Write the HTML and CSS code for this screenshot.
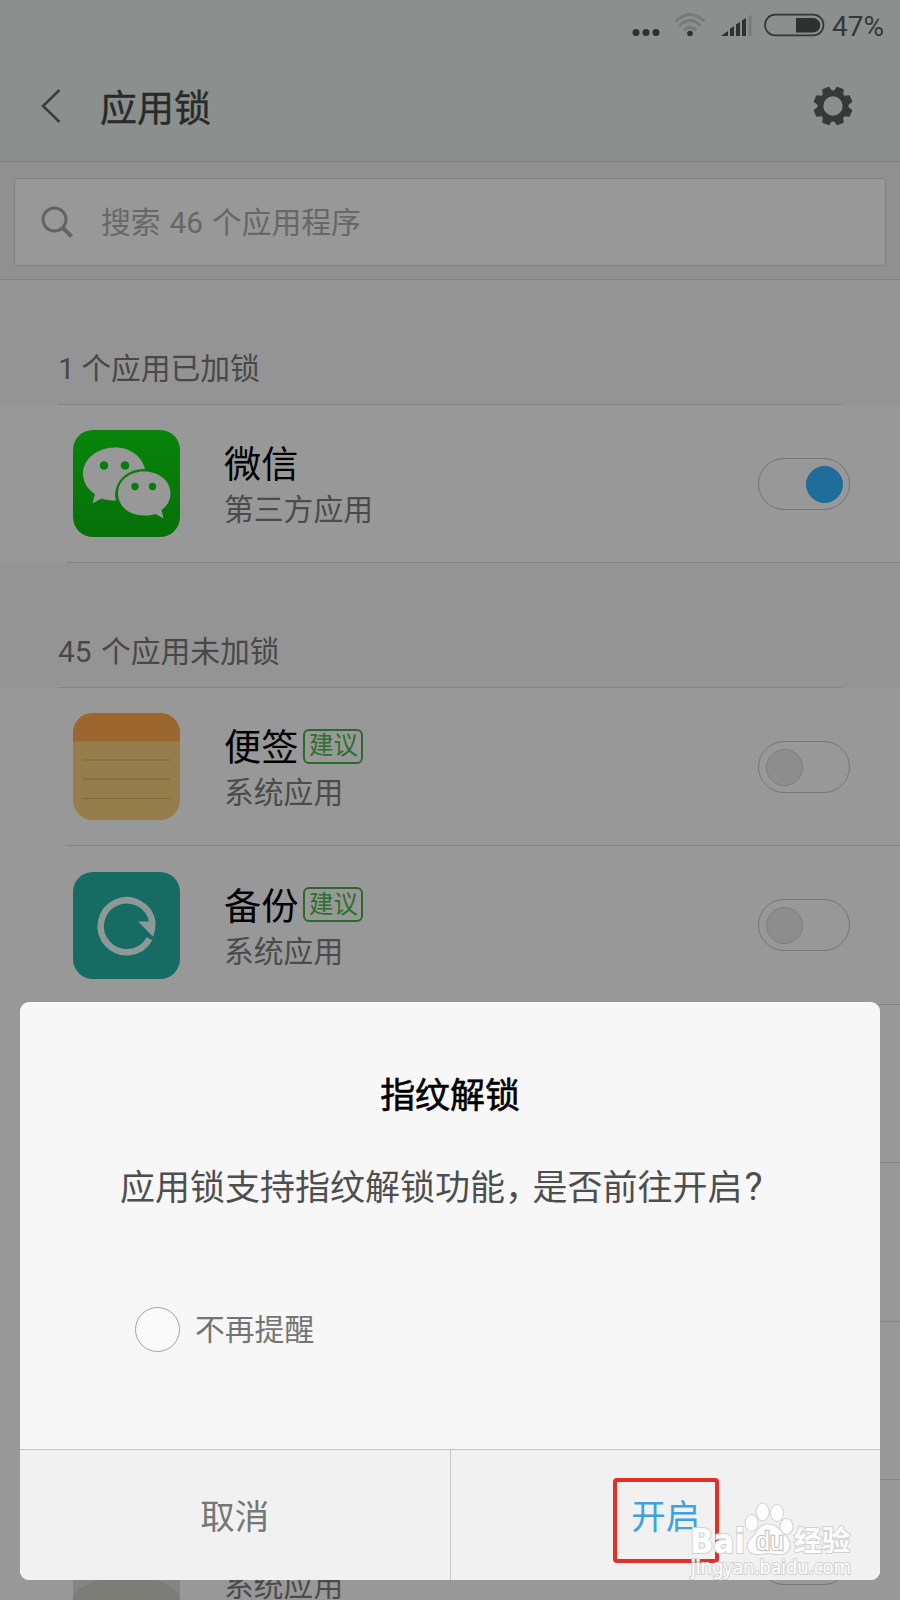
FILE: index.html
```html
<!DOCTYPE html>
<html lang="zh-CN">
<head>
<meta charset="utf-8">
<title>应用锁</title>
<link rel="stylesheet" href="styles.css">
</head>
<body>
<div class="screen">
  <header class="top">
    <div class="status">
      <svg class="status-icons" width="200" height="40" viewBox="0 0 200 40">
        <g fill="#2f3030"><circle cx="11" cy="22.500" r="3.500"/><circle cx="21" cy="22.500" r="3.500"/><circle cx="31" cy="22.500" r="3.500"/><circle cx="65" cy="23.500" r="2.800"/></g>
        <g fill="none" stroke="#777a79" stroke-width="2.800"><path d="M50.500 11.500Q65-2.500 79.500 11.500"/><path d="M54.500 15.700Q65 5.500 75.500 15.700"/><path d="M59 20.500Q65 14 71 20.500"/></g>
        <path fill="#2f3030" d="M96 26l7-5v5zM105 26v-7.300l4-2.500V26zM111 26V14.500l4-2.500v14zM117 26V10.500L121 8v18z"/>
        <path fill="#777a79" d="M123.500 26V6.500l3-1.500v21z"/>
        <rect x="140" y="4.700" width="58.500" height="20.600" rx="10.300" fill="none" stroke="#353636" stroke-width="1.700"/>
        <path fill="#2f3030" d="M171 8h17a7.300 7.300 0 0 1 0 14.600h-17z"/>
      </svg>
      <span class="percent">47%</span>
    </div>
    <div class="titlebar">
      <svg class="back" width="22" height="36" viewBox="0 0 22 36"><path d="M19.500 2L3 18l16.500 16" fill="none" stroke="#3b3d3c" stroke-width="2.500"/></svg>
      <h1 class="title">应用锁</h1>
      <svg class="gear" width="40" height="40" viewBox="-20 -20 40 40">
        <g fill="#373838">
          <path fill-rule="evenodd" d="M-15.500 0a15.500 15.500 0 1 0 31 0a15.500 15.500 0 1 0-31 0zM-9.700 0a9.700 9.700 0 1 1 19.400 0a9.700 9.700 0 1 1-19.400 0z"/>
          <g id="teeth"><path id="tooth" d="M-5.500-12l1.500-6.500q.2-1 1.200-1h5.600q1 0 1.200 1L5.500-12z" transform="rotate(22.500)"/><use href="#tooth" transform="rotate(45)"/><use href="#tooth" transform="rotate(90)"/><use href="#tooth" transform="rotate(135)"/></g>
          <use href="#teeth" transform="rotate(180)"/>
        </g>
      </svg>
    </div>
  </header>

  <div class="search-area">
    <div class="search">
      <svg width="34" height="34" viewBox="0 0 34 34"><g fill="none" stroke="#636363" stroke-width="3"><circle cx="14.500" cy="14.500" r="11.500"/><path d="M22.500 22.500l9 9" stroke-width="4"/></g></svg>
      <span class="placeholder">搜索 46 个应用程序</span>
    </div>
  </div>

  <h2 class="section">1 个应用已加锁</h2>
  <div class="row">
    <svg class="icon" viewBox="0 0 107 107">
      <defs><linearGradient id="wx" x2="0" y2="1"><stop stop-color="#07850b"/><stop offset="1" stop-color="#077009"/></linearGradient></defs>
      <rect width="107" height="107" rx="20" fill="url(#wx)"/>
      <path fill="#989898" d="M72 39C69 26 57 17.500 42 17.500C24 17.500 10 29 10 44c0 8 4.500 15.500 12 20l-2.500 9.500 9-5c4.500 1.400 8.500 2 14.500 2c-4-16 9-32 29-31.500z"/>
      <path fill="#989898" d="M71 41.500c15 0 26.500 9.500 26.500 22 0 7-3.500 12.500-9 16.500l2 8.500-8-4.500c-3.500 1-7 1.500-11.500 1.500-15 0-26-9.500-26-22s11-22 26-22z"/>
      <g fill="#077c0a"><circle cx="31" cy="35.500" r="4.300"/><circle cx="52" cy="35.500" r="4.300"/><circle cx="62" cy="56.500" r="3.700"/><circle cx="79.500" cy="56.500" r="3.700"/></g>
    </svg>
    <div class="info"><div class="name">微信</div><div class="kind">第三方应用</div></div>
    <div class="toggle on"><i></i></div>
  </div>

  <h2 class="section unlocked">45 个应用未加锁</h2>
  <div class="row">
    <svg class="icon" viewBox="0 0 107 107">
      <defs><clipPath id="tile"><rect width="107" height="107" rx="20"/></clipPath></defs>
      <g clip-path="url(#tile)"><rect width="107" height="107" fill="#957d4c"/><rect width="107" height="28.500" fill="#9c672f"/></g>
      <path d="M9 47h88M9 66h88M9 85.500h88" stroke="#80683c"/>
    </svg>
    <div class="info"><div class="name">便签<span class="badge">建议</span></div><div class="kind">系统应用</div></div>
    <div class="toggle"><i></i></div>
  </div>
  <div class="row">
    <svg class="icon" viewBox="0 0 107 107">
      <rect width="107" height="107" rx="20" fill="#166c63"/>
      <path d="M76.500 66.800A26 26 0 1 1 79.500 51" fill="none" stroke="#8b9a98" stroke-width="6.500"/>
      <path d="M65 49.500h17.300q.8 7-2.300 15.200z" fill="#8b9a98"/>
    </svg>
    <div class="info"><div class="name">备份<span class="badge">建议</span></div><div class="kind">系统应用</div></div>
    <div class="toggle"><i></i></div>
  </div>
  <div class="row"></div>
  <div class="row"></div>
  <div class="row"></div>
  <div class="row">
    <svg class="icon" viewBox="0 0 107 107">
      <rect width="107" height="107" rx="6" fill="#858585"/><ellipse cx="53.500" cy="104" rx="60" ry="34" fill="#7d7d77"/>
    </svg>
    <div class="info"><div class="name"></div><div class="kind">系统应用</div></div>
    <div class="toggle"><i></i></div>
  </div>

  <div class="dialog">
    <div class="dialog-body">
      <h3 class="dialog-title">指纹解锁</h3>
      <p class="message">应用锁支持指纹解锁功能<span class="comma">，</span>是否前往开启<span class="question">?</span></p>
      <label class="remind"><i class="radio"></i><span>不再提醒</span></label>
    </div>
    <div class="actions">
      <div class="action"><span class="cancel">取消</span></div>
      <div class="action primary"><span class="mark">开启</span></div>
    </div>
  </div>

  <div class="watermark">
    <svg width="180" height="90" viewBox="0 0 180 90">
      <g class="wm">
        <text x="10" y="53" class="wm-brand" textLength="55" lengthAdjust="spacingAndGlyphs">Bai</text>
        <ellipse cx="71.500" cy="23" rx="6" ry="8"/><ellipse cx="82.500" cy="12" rx="6" ry="8.500"/><ellipse cx="97" cy="13" rx="6" ry="8"/><ellipse cx="106.500" cy="26.500" rx="6" ry="7.500"/>
        <path d="M88 24.500c-9 0-11 8-15.500 13-8 7-5 16.500 5 16.500 5 0 7-1 10.500-1s8 1 13 1c8 0 11.500-9.500 5.500-16.500-6-6-9.500-13-18.500-13z"/>
        <text x="76" y="50" class="wm-du">du</text>
        <text x="114" y="51" class="wm-cn">经验</text>
        <text x="11" y="74" class="wm-url" textLength="160" lengthAdjust="spacingAndGlyphs">jingyan.baidu.com</text>
      </g>
    </svg>
  </div>
</div>
</body>
</html>
```
FILE: styles.css
```css
* { box-sizing: border-box; }
body { margin: 0; background: #989898; font-family: Roboto, "Noto Sans CJK SC", sans-serif; }
h1, h2, h3, p { margin: 0; font-weight: 400; }
svg { display: block; flex: none; }
.screen { position: relative; width: 900px; height: 1600px; overflow: hidden; background: #989898; }

.top { height: 162px; background: #8b8f8e; border-bottom: 1px solid #7f8181; }
.status { display: flex; justify-content: flex-end; height: 52px; padding: 10px 14px 0 0; }
.status-icons { margin-right: 7px; }
.percent { width: 54px; padding-top: 1px; font-size: 28px; line-height: 32px; color: #363737; white-space: nowrap; }
.titlebar { display: flex; align-items: center; height: 108px; padding: 0 47px 0 40px; }
.title { flex: 1; margin-left: 38px; padding-top: 8px; font-size: 37px; line-height: 54px; color: #292a2a; -webkit-text-stroke: .4px #292a2a; }

.search-area { height: 118px; padding: 16px 14px 14px; background: #909090; border-bottom: 1px solid #828282; }
.search { display: flex; align-items: center; gap: 27px; height: 88px; padding-left: 25px; background: #989898; border: 1px solid #828282; border-radius: 3px; font-size: 29.8px; color: #676767; }
.placeholder { padding-bottom: 4px; word-spacing: 1.5px; }

.section { height: 124.500px; padding: 67px 0 0 58px; background: linear-gradient(#858585, #858585) 58px 100% / 784px 1px no-repeat #949494; font-size: 29.8px; line-height: 44px; color: #484848; word-spacing: -1px; }
.unlocked { word-spacing: 2px; }
.row { display: flex; align-items: center; height: 158.500px; padding: 0 50px 0 73px; background: linear-gradient(#858585, #858585) 66px 100% / 834px 1px no-repeat #989898; }
.icon { width: 107px; height: 107px; }
.info { flex: 1; margin-left: 44px; padding-top: 5px; }
.name { display: flex; align-items: center; height: 48px; font-size: 37.200px; line-height: 48px; color: #000; }
.kind { height: 42px; font-size: 29.800px; line-height: 42px; color: #4b4b4b; }
.badge { display: flex; align-items: center; justify-content: center; width: 60px; height: 35px; margin: -4px 0 0 5px; border: 2px solid #2a6a28; border-radius: 6px; font-size: 24.500px; line-height: 30px; color: #2c702b; }
.toggle { width: 92px; height: 52px; padding: 7px; border: 1px solid #767676; border-radius: 26px; }
.toggle i { display: block; width: 37px; height: 37px; border: 1px solid #7e7e7e; border-radius: 50%; background: #8d8d8d; }
.toggle.on i { margin-left: 40px; border-color: #1e6d9b; background: #1e6d9b; }

.dialog { position: absolute; left: 20px; top: 1002px; width: 860px; height: 578px; display: flex; flex-direction: column; border-radius: 9px; background: #f7f7f7; overflow: hidden; }
.dialog-body { flex: 1; padding: 69px 100px 0; }
.dialog-title { font-size: 34.900px; line-height: 52px; color: #000; text-align: center; -webkit-text-stroke: .6px #000; }
.message { margin-top: 40px; font-size: 35px; line-height: 52px; color: #4e4e4e; white-space: nowrap; }
.comma { letter-spacing: -7.500px; }
.question { margin-left: 2px; font-size: 38px; line-height: 1; }
.remind { display: flex; align-items: center; gap: 15px; height: 46px; margin: 91px 0 0 15px; font-size: 29.800px; color: #747474; }
.remind span { padding-bottom: 4px; }
.radio { width: 45px; height: 45px; border: 1.500px solid #a3a3a3; border-radius: 50%; background: #fafafa; }
.actions { display: flex; height: 131px; border-top: 1px solid #c2c2c2; background: #f1f1f1; }
.action { display: flex; flex: 1; align-items: center; justify-content: center; font-size: 34.500px; line-height: 50px; color: #767676; }
.action + .action { border-left: 1px solid #c9c9c9; }
.cancel { padding-top: 4px; }
.action.primary { color: #3ea2df; }
.mark { display: flex; align-items: center; justify-content: center; width: 106px; height: 85px; margin: 10px 0 0 1px; padding-bottom: 7px; border: 4px solid #e13126; border-radius: 4px; }

.watermark { position: absolute; left: 680px; top: 1500px; }
.wm { fill: #fdfdfd; stroke: #d2d2d2; stroke-width: 2px; paint-order: stroke; }
.wm-brand { font: 700 34px "DejaVu Sans", sans-serif; }
.wm-du { font: 400 25px "Liberation Sans", sans-serif; stroke-width: 2.500px; stroke: #c8c8c8; }
.wm-cn { font: 700 28px "Noto Sans CJK SC", sans-serif; }
.wm-url { font: 400 19px "Noto Sans", sans-serif; }
```
